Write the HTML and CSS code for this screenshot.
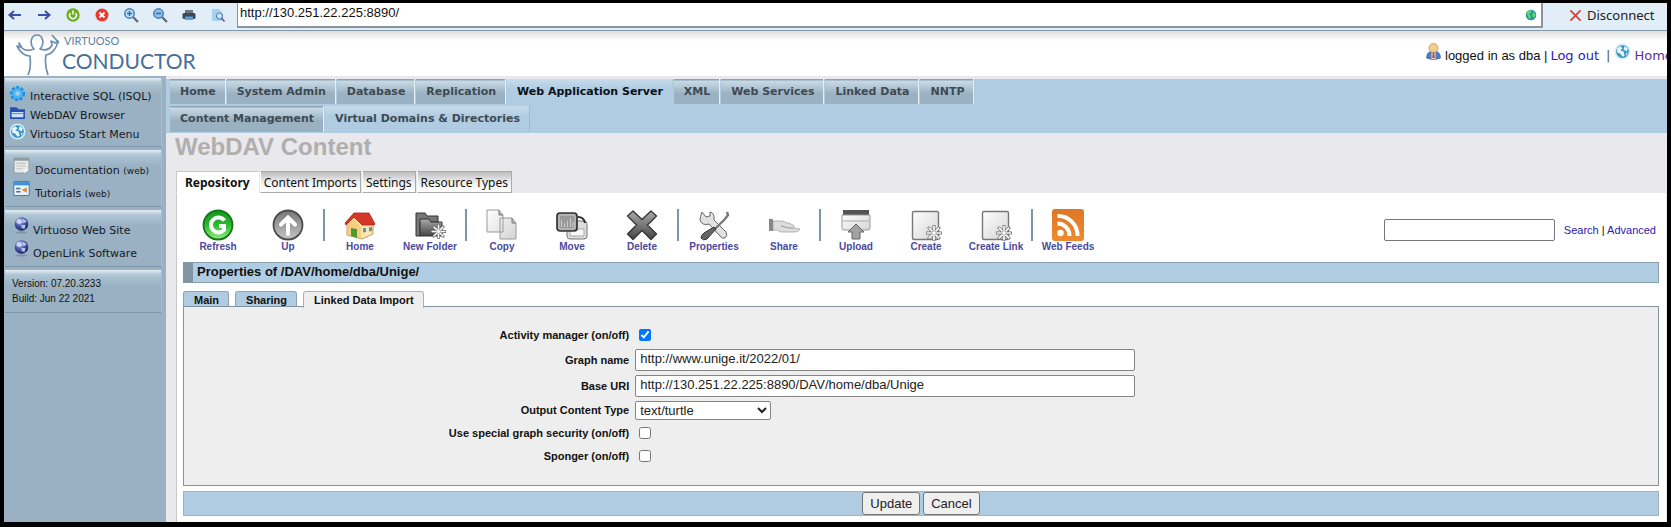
FILE: index.html
```html
<!DOCTYPE html>
<html lang="en">
<head>
<meta charset="utf-8">
<title>Virtuoso Conductor - WebDAV Content</title>
<link rel="stylesheet" href="styles.css">
</head>
<body>
<svg class="defs" width="0" height="0" aria-hidden="true">
  <defs>
    <linearGradient id="gGreen" x1="0" y1="0" x2="0" y2="1"><stop offset="0" stop-color="#0d9a18"/><stop offset=".5" stop-color="#2db92e"/><stop offset="1" stop-color="#8df07e"/></linearGradient>
    <linearGradient id="gGray" x1="0" y1="0" x2="0" y2="1"><stop offset="0" stop-color="#777"/><stop offset="1" stop-color="#c4c4c4"/></linearGradient>
    <linearGradient id="gDark" x1="0" y1="0" x2="0" y2="1"><stop offset="0" stop-color="#aaa"/><stop offset="1" stop-color="#444"/></linearGradient>
    <linearGradient id="gPaper" x1="0" y1="0" x2="1" y2="1"><stop offset="0" stop-color="#fff"/><stop offset="1" stop-color="#d4d4d4"/></linearGradient>
    <linearGradient id="gOrange" x1="0" y1="0" x2="0" y2="1"><stop offset="0" stop-color="#dd7626"/><stop offset="1" stop-color="#f08a2e"/></linearGradient>
    <radialGradient id="gBall" cx=".4" cy=".3" r=".7"><stop offset="0" stop-color="#c8d4f4"/><stop offset=".5" stop-color="#4a5cae"/><stop offset="1" stop-color="#1a2466"/></radialGradient>
    <symbol id="spark" viewBox="0 0 16 16"><path d="M8 1v14M1 8h14M3 3l10 10M13 3L3 13" stroke="#666" stroke-width="3" stroke-linecap="round"/><path d="M8 1.300v13.400M1.300 8h13.400M3.200 3.200l9.600 9.600M12.800 3.200l-9.600 9.600" stroke="#fff" stroke-width="1.700" stroke-linecap="round"/><circle cx="8" cy="8" r="2.200" fill="#fff" stroke="#777" stroke-width=".6"/></symbol>
    <symbol id="globe" viewBox="0 0 16 16"><circle cx="8" cy="8" r="7.500" fill="#d3ecf6"/><circle cx="8" cy="8" r="6" fill="#3a94c4"/><path d="M3 5l3-2 2 2-2 2 3 1 1 4-2 1-2-3-3-1zM10 3l3 2-1 3-3-2zM11 10l2-1-1 3z" fill="#e6f6fb"/></symbol>
    <symbol id="ball" viewBox="0 0 16 17"><ellipse cx="8" cy="15.500" rx="6" ry="1.200" fill="#8494a4"/><circle cx="8" cy="7" r="6.800" fill="url(#gBall)"/><path d="M3 3q3-2 4 0l2 2-3 2-3-1zM9 2q3 0 4 3l-3 1zM8 8l4 0-1 4-3-1z" fill="#d8e0f6" opacity=".8"/></symbol>
  </defs>
</svg>
<div class="page">
  <form class="browser-bar">
    <div class="browser-tools">
      <button type="button" aria-label="Back"><svg viewBox="0 0 16 16"><path d="M14 8H3M7 4L2.500 8 7 12" fill="none" stroke="#3f4ea6" stroke-width="2"/></svg></button>
      <button type="button" aria-label="Forward"><svg viewBox="0 0 16 16"><path d="M2 8h11M9 4l4.500 4L9 12" fill="none" stroke="#3f4ea6" stroke-width="2"/></svg></button>
      <button type="button" aria-label="Reload"><svg viewBox="0 0 16 16"><circle cx="8" cy="8" r="6.700" fill="#6fae22"/><path d="M5.300 6.200a3.400 3.400 0 1 0 5.400 0M8 3.500v4" fill="none" stroke="#fff" stroke-width="1.500"/></svg></button>
      <button type="button" aria-label="Stop"><svg viewBox="0 0 16 16"><circle cx="8" cy="8" r="6.500" fill="#e43c32"/><path d="M5.500 5.500l5 5M10.500 5.500l-5 5" stroke="#fff" stroke-width="1.800"/></svg></button>
      <button type="button" aria-label="Zoom in"><svg viewBox="0 0 16 16"><path d="M10 10l5 5" stroke="#666" stroke-width="2.200"/><circle cx="6.500" cy="6.500" r="4.700" fill="#b9dbf5" stroke="#4380be" stroke-width="1.500"/><path d="M4 6.500h5M6.500 4v5" stroke="#2c68ac" stroke-width="1.300"/></svg></button>
      <button type="button" aria-label="Zoom out"><svg viewBox="0 0 16 16"><path d="M10 10l5 5" stroke="#666" stroke-width="2.200"/><circle cx="6.500" cy="6.500" r="4.700" fill="#8fc1ea" stroke="#4380be" stroke-width="1.500"/><path d="M4 6.500h5" stroke="#2c68ac" stroke-width="1.500"/></svg></button>
      <button type="button" aria-label="Print"><svg viewBox="0 0 16 16"><path d="M4 3h8v4H4z" fill="#6a7680"/><rect x="1.500" y="6" width="13" height="6" rx="1.500" fill="#3c4852"/><path d="M4 9.500h8V13H4z" fill="#5ca0dc"/></svg></button>
      <button type="button" aria-label="Preview"><svg viewBox="0 0 16 16"><path d="M2 2h7l3 3v9H2z" fill="#a5d0f2"/><circle cx="9.500" cy="9" r="3" fill="#d6ebfa" stroke="#5588b4" stroke-width="1.200"/><path d="M11.500 11l3 3.500" stroke="#667" stroke-width="1.700"/></svg></button>
    </div>
    <label class="address"><input type="text" aria-label="Address" value="http://130.251.22.225:8890/"><svg viewBox="0 0 16 16"><circle cx="8" cy="8" r="7" fill="#248fa6"/><path d="M2 5q3-4 6-3l1 2-3 3 2 3-1 4q-4-3-4-6zM10 3q4 2 4 6l-3 3-2-4 2-2z" fill="#5fd36d"/></svg></label>
    <button type="button" class="disconnect"><svg viewBox="0 0 14 14"><path d="M1.500 1.500l11 11M12.500 1.500l-11 11" stroke="#d8443a" stroke-width="2"/></svg>Disconnect</button>
  </form>

  <header class="masthead">
    <a class="brand" href="#">
      <svg viewBox="0 0 46 42"><path d="M12 41C16 33 14 27 14 22 8 22 4 18 1 12l3 1-1-4 3 5c3 3 7 3 12 1-5-5-3-14 3-14s8 9 3 14c6 2 10 0 12-4l-1-4 4 2 3-2c-1 7-6 13-12 14-1 6-1 12 2 20M36 1l7 8" fill="none" stroke="#6f8fae" stroke-width="1.700" stroke-linejoin="round"/></svg>
      <span class="brand-text"><span class="brand-small">VIRTUOSO</span><span class="brand-big">CONDUCTOR</span></span>
    </a>
    <div class="session">
      <svg viewBox="0 0 16 17"><path d="M1 15q0-7 7-7t7 7q-7 3-14 0z" fill="#4a80c4" stroke="#2a5596" stroke-width=".6"/><path d="M6 9l2 2 2-2v7H6z" fill="#f4d9d5"/><path d="M7.300 10h1.400l.5 5H6.800z" fill="#c83a30"/><circle cx="8" cy="5" r="4.500" fill="#f3cd8c" stroke="#b98d47" stroke-width=".7"/></svg>
      <span class="who">logged in as dba |</span>
      <a class="logout" href="#">Log out</a>
      <span class="bar">|</span>
      <svg viewBox="0 0 16 16"><use href="#globe"/></svg>
      <a class="home" href="#">Home</a>
    </div>
  </header>

  <div class="columns">
    <aside class="sidebar">
      <ul class="box tight">
        <li><svg viewBox="0 0 16 16"><circle cx="8" cy="8" r="5.600" fill="#43aef2" stroke="#238ee0" stroke-width="3" stroke-dasharray="2.600 1.500"/><circle cx="8" cy="8" r="4.700" fill="#4bb5f6"/><circle cx="8" cy="8" r="2.200" fill="#a9cde2"/></svg><a href="#">Interactive SQL (ISQL)</a></li>
        <li><svg viewBox="0 0 16 16"><path d="M1 3h6l2 2h6v9H1z" fill="#2450b4"/><path d="M2.500 7.500h11v5h-11z" fill="#cfe3fb"/><path d="M2.500 9h11" stroke="#5d92e4" stroke-width="1"/></svg><a href="#">WebDAV Browser</a></li>
        <li><svg viewBox="0 0 16 16"><use href="#globe"/></svg><a href="#">Virtuoso Start Menu</a></li>
      </ul>
      <ul class="box indent">
        <li><svg viewBox="0 0 16 16"><path d="M1 1h14v11l-4 3H1z" fill="#e9e9e6" stroke="#8c969c" stroke-width=".8"/><path d="M1 1h14v2.500H1z" fill="#8e9ba3"/><path d="M3 6h9M3 8.500h9M3 11h6" stroke="#c0c4c6"/><path d="M15 12h-4v3z" fill="#fff"/></svg><a href="#">Documentation <small>(web)</small></a></li>
        <li><svg viewBox="0 0 16 16"><rect x=".7" y="1.500" width="14.600" height="13" rx="1" fill="#e6f2fb" stroke="#3a82c4"/><path d="M1 2h14v3H1z" fill="#3f8fd6"/><path d="M3 8h4M3 11h4" stroke="#4d6d94" stroke-width="1.300"/><path d="M8 9.500l5-2.500v5z" fill="#e08c2c"/></svg><a href="#">Tutorials <small>(web)</small></a></li>
      </ul>
      <ul class="box">
        <li><svg viewBox="0 0 16 17"><use href="#ball"/></svg><a href="#">Virtuoso Web Site</a></li>
        <li><svg viewBox="0 0 16 17"><use href="#ball"/></svg><a href="#">OpenLink Software</a></li>
      </ul>
      <div class="box version">Version: 07.20.3233<br>Build: Jun 22 2021</div>
    </aside>

    <main class="main">
      <nav class="nav">
        <div class="nav-row">
          <a href="#">Home</a><a href="#">System Admin</a><a href="#">Database</a><a href="#">Replication</a><a href="#" class="active">Web Application Server</a><a href="#">XML</a><a href="#">Web Services</a><a href="#">Linked Data</a><a href="#">NNTP</a>
        </div>
        <div class="nav-row second">
          <a href="#">Content Management</a><a href="#" class="current">Virtual Domains &amp; Directories</a>
        </div>
      </nav>
      <h1>WebDAV Content</h1>
      <nav class="tabs"><a href="#" class="active">Repository</a><a href="#">Content Imports</a><a href="#">Settings</a><a href="#">Resource Types</a></nav>

      <section class="content">
        <div class="toolbar">
          <button type="button"><svg viewBox="0 0 32 32"><circle cx="16" cy="16" r="14.500" fill="url(#gGreen)" stroke="#17761c" stroke-width="1.800"/><path d="M22.500 11.500A7.500 7.500 0 1 0 22 21v-4h-5" fill="none" stroke="#fff" stroke-width="4"/></svg>Refresh</button>
          <button type="button"><svg viewBox="0 0 32 32"><circle cx="16" cy="16" r="14.500" fill="url(#gGray)" stroke="#4c4c4c" stroke-width="1.800"/><path d="M16 25V9M9 15.500L16 8.500l7 7" fill="none" stroke="#fff" stroke-width="4" stroke-linecap="round"/></svg>Up</button>
          <span class="sep"></span>
          <button type="button"><svg viewBox="0 0 32 32"><path d="M3 14l9-7 6 8h11v10l-11 5-15-4z" fill="#fbe7ac" stroke="#b08a48" stroke-width=".8"/><path d="M4 15l6-6 7 9v11l-13-4z" fill="#f7cd82"/><path d="M10 4h15l6 11-1 1H18L10 8l-8 8-1-2z" fill="#d63626" stroke="#a4241a" stroke-width=".8"/><path d="M7 19l6 1v9l-6-2z" fill="#4b9a34"/><path d="M19 19h3v4l-3 .5zM25 18.500l3-.5v4l-3 .5z" fill="#6a8ea8"/></svg>Home</button>
          <button type="button"><svg viewBox="0 0 32 32"><path d="M2 4h9l2 3h11v6H6v14H2z" fill="#777" stroke="#333"/><path d="M6 10h9l2 3h11v14H6z" fill="url(#gDark)" stroke="#333"/><use href="#spark" x="17" y="15" width="15" height="15"/></svg>New Folder</button>
          <span class="sep"></span>
          <button type="button"><svg viewBox="0 0 32 32"><path d="M1 1h12l4 5v17H1zM14 9h12l4 5v16H14z" fill="url(#gPaper)" stroke="#999"/><path d="M13 1v5h4M26 9v5h4" fill="#bbb" stroke="#777"/></svg>Copy</button>
          <button type="button"><svg viewBox="0 0 32 32"><rect x="11" y="12" width="20" height="18" rx="3" fill="#ddd" stroke="#777"/><path d="M14 20h14v7H14z" fill="#f8f8f8" stroke="#aaa"/><path d="M22 8q6 0 7 6" fill="none" stroke="#333" stroke-width="2"/><rect x="1" y="4" width="20" height="18" rx="3" fill="#999" stroke="#333" stroke-width="1.700"/><rect x="3" y="6" width="16" height="14" rx="1" fill="none" stroke="#ccc"/><path d="M5.500 18v-7M8.500 18v-4M11.500 18v-6M14.500 18V9M17 18v-5" stroke="#ccc" fill="none"/></svg>Move</button>
          <button type="button"><svg viewBox="0 0 32 32"><path d="M7 2l9 8.500L25 2l5.500 5-9 9 9 9-5.500 5.500-9-9-9 9L1.500 25l9-9-9-9z" fill="url(#gDark)" stroke="#333" stroke-width="1.300" stroke-linejoin="round"/></svg>Delete</button>
          <span class="sep"></span>
          <button type="button"><svg viewBox="0 0 32 32"><path d="M4 3l4 5 4-1 0-4q5 1 4 8l12 12q2 4-1 6-3 1-5-2L11 15q-7 2-9-4 0-3 2-8z" fill="#e2e2e2" stroke="#666"/><path d="M29 3l1 3-3 4-11 11" fill="none" stroke="#777" stroke-width="2.400"/><path d="M16 18l2 2-9 10q-4 2-6-1 0-3 3-5z" fill="#666" stroke="#333"/></svg>Properties</button>
          <button type="button"><svg viewBox="0 0 32 32"><path d="M1 10h4v12H1z" fill="#888"/><path d="M5 12h9l9 3q4 1 3 4l6 1q-1 3-7 3H13l-4-2H5z" fill="#ddd" stroke="#999" stroke-width=".7"/><path d="M13 17l8 2h5" fill="none" stroke="#999"/></svg>Share</button>
          <span class="sep"></span>
          <button type="button"><svg viewBox="0 0 32 32"><path d="M3 1h26v5H3z" fill="#555"/><path d="M2 6h28v13q0 2-2 2H4q-2 0-2-2z" fill="url(#gPaper)" stroke="#999"/><path d="M3 12h26" stroke="#aaa"/><path d="M16 15l8 8h-4v7h-8v-7H8z" fill="#a2a2a2" stroke="#666"/></svg>Upload</button>
          <button type="button"><svg viewBox="0 0 32 32"><rect x="2.500" y="2.500" width="26" height="28" rx="1.500" fill="url(#gPaper)" stroke="#777" stroke-width="1.400"/><use href="#spark" x="16" y="16" width="16" height="16"/></svg>Create</button>
          <button type="button"><svg viewBox="0 0 32 32"><rect x="2.500" y="2.500" width="26" height="28" rx="1.500" fill="url(#gPaper)" stroke="#777" stroke-width="1.400"/><use href="#spark" x="16" y="16" width="16" height="16"/></svg>Create Link</button>
          <span class="sep"></span>
          <button type="button"><svg viewBox="0 0 32 32"><rect width="32" height="32" rx="3" fill="url(#gOrange)"/><circle cx="8.500" cy="24" r="3.200" fill="#fff"/><path d="M5.500 14.500A12 12 0 0 1 17.500 27M5.500 7A19.500 19.500 0 0 1 25.500 27" fill="none" stroke="#fff" stroke-width="4"/></svg>Web Feeds</button>
          <div class="search"><input type="text" aria-label="Search text"><span><a href="#">Search</a> | <a href="#">Advanced</a></span></div>
        </div>

        <h2>Properties of /DAV/home/dba/Unige/</h2>
        <nav class="subtabs"><a href="#">Main</a><a href="#">Sharing</a><a href="#" class="active">Linked Data Import</a></nav>
        <form class="props">
          <div class="fields">
            <div class="field"><label for="act">Activity manager (on/off)</label><input id="act" type="checkbox" checked></div>
            <div class="field tall"><label for="graph">Graph name</label><input id="graph" type="text" value="http://www.unige.it/2022/01/"></div>
            <div class="field tall"><label for="base">Base URI</label><input id="base" type="text" value="http://130.251.22.225:8890/DAV/home/dba/Unige"></div>
            <div class="field"><label for="type">Output Content Type</label><select id="type"><option>text/turtle</option></select></div>
            <div class="field"><label for="sec">Use special graph security (on/off)</label><input id="sec" type="checkbox"></div>
            <div class="field"><label for="spo">Sponger (on/off)</label><input id="spo" type="checkbox"></div>
          </div>
          <div class="actions"><button type="submit">Update</button><button type="button">Cancel</button></div>
        </form>
      </section>
    </main>
  </div>
</div>
</body>
</html>
```

FILE: styles.css
```css
* { box-sizing: border-box; }
body { margin: 0; background: #000; font-family: "Liberation Sans", Arial, sans-serif; color: #111; }
a { text-decoration: none; }
button { font-family: inherit; cursor: pointer; }
.defs { position: absolute; }
.page {
  min-height: 100vh;
  display: flex;
  flex-direction: column;
  border: solid #000;
  border-width: 3px 4px 5px;
  background: #fff;
  overflow: hidden;
}

.browser-bar { display: flex; height: 28px; background: #e1eef8; border-bottom: 1px solid #8499a8; }
.browser-tools { display: flex; align-items: center; gap: 13px; padding: 0 11px 4px 3px; }
.browser-tools button { width: 16px; height: 16px; padding: 0; border: 0; background: none; }
.browser-tools button svg { display: block; width: 16px; height: 16px; }
.address { flex: 1; display: flex; align-items: center; height: 25px; padding-right: 4px; background: #fff; border: 1px solid #8b949b; border-width: 0 2px 2px 1px; }
.address input { flex: 1; min-width: 0; height: 22px; padding: 0 0 4px 2px; border: 0; background: none; font: 13px "Liberation Sans", Arial, sans-serif; color: #111; }
.address svg { width: 12px; height: 12px; }
.disconnect { width: 124px; padding: 0 0 3px 26px; border: 0; background: none; display: flex; align-items: center; gap: 5px; font: 13px "Noto Sans", sans-serif; color: #222; }
.disconnect svg { width: 13px; height: 13px; }

.masthead { display: flex; justify-content: space-between; height: 45px; background: linear-gradient(#dfdfdf, #fff 10px); }
.brand { display: flex; align-items: flex-end; padding-left: 12px; color: #5c7fa3; }
.brand svg { width: 46px; height: 42px; }
.brand-text { display: flex; flex-direction: column; padding-bottom: 2px; font-family: Lato, sans-serif; }
.brand-small { padding-left: 2px; font-size: 11px; line-height: 14px; }
.brand-big { font-size: 21px; line-height: 26px; color: #456f9a; }
.session { flex: none; display: flex; align-items: center; gap: 3px; width: 242px; padding-top: 3px; font-size: 13px; white-space: nowrap; }
.session > * { flex: none; }
.session svg { width: 17px; height: 17px; margin-bottom: 8px; }
.logout, .bar, .home { font-family: "DejaVu Sans", Verdana, sans-serif; }
.logout { color: #2a20c0; }
.bar { color: #555; padding: 0 1px 0 4px; }
.home { color: #5b3090; }

.columns { flex: 1; display: flex; }
.sidebar { flex: none; width: 162px; padding: 2px 4px 0 1px; background: #9ab1c4; font-family: "DejaVu Sans", Verdana, sans-serif; font-size: 11px; }
.box { margin: 0 0 3px; padding: 7px 0 0 8px; list-style: none; border-bottom: 1px solid #7d97aa; border-right: 1px solid #a8bccb; background: linear-gradient(#e6eef3, #aec5d4 5px, #9ab1c4 16px); }
.box li { display: flex; align-items: center; gap: 3px; height: 23px; }
.box svg { flex: none; width: 17px; height: 17px; margin-bottom: 6px; }
.box a { color: #14191d; white-space: nowrap; padding-top: 4px; }
.box small { font-size: 9px; }
.box.tight { padding: 7px 0 4px 4px; }
.box.tight li { height: 19px; gap: 4px; }
.box.tight svg { margin-bottom: 3px; }
.box.indent li { gap: 5px; }
.box:not(.tight) { min-height: 57px; }
.box.version { min-height: 43px; padding: 6px 0 6px 7px; font: 10px/15px "Liberation Sans", Arial, sans-serif; }

.main { flex: 1; min-width: 0; display: flex; flex-direction: column; background: #e8e8ed; }
.nav { margin-top: 3px; padding-left: 4px; background: #b0cce2; font: bold 11px "DejaVu Sans", Verdana, sans-serif; }
.nav-row { display: flex; gap: 1px; height: 27px; padding-bottom: 2px; }
.nav-row a { padding: 6px 9px 0 10px; color: #3e4a52; background: linear-gradient(#8ba3b3 0, #8ba3b3 1px, #c9dae5 2px, #9ab1c2 15px); border-right: 1px solid #e4eef4; white-space: nowrap; }
.nav-row .active { color: #0b1116; background: linear-gradient(#c8dcec, #b0cce2 10px); border-right-color: #b0cce2; }
.nav-row .current { background: linear-gradient(#c8dcec, #b0cce2 10px); border-right: 1px solid #9cb9d0; }
.nav-row.second { padding-bottom: 1px; }
h1 { margin: 0; padding-left: 9px; font-size: 24px; line-height: 28px; color: #afafad; }
.tabs { display: flex; gap: 1px; margin-top: 10px; padding-left: 10px; font: 12px/19px "Noto Sans", "DejaVu Sans", sans-serif; }
.tabs a { height: 22px; padding: 1px 3px 0; color: #111; border: 1px solid #aaa; border-left-color: #fff; background: linear-gradient(#bdbdbd, #eee 10px, #fff); }
.tabs .active { padding: 1px 8px 0 8px; font-weight: bold; background: #fff; border-color: #c8c8c8 #fff #fff #c8c8c8; }

.content { flex: 1; margin: 0 1px 0 10px; padding: 16px 7px 6px 6px; display: flex; flex-direction: column; background: #fff; border-left: 1px solid #c8c8c8; }
.toolbar { display: flex; align-items: flex-start; }
.toolbar button { flex: none; width: 70px; padding: 0; border: 0; background: none; font-size: 10px; line-height: 11px; font-weight: bold; color: #4a4a9c; }
.toolbar button svg { display: block; width: 32px; height: 32px; margin: 0 auto; }
.sep { flex: none; width: 2px; height: 32px; background: #7d95a6; }
.search { margin: 10px 3px 0 auto; display: flex; align-items: center; gap: 9px; font-size: 11px; white-space: nowrap; }
.search input { width: 171px; height: 22px; border: 1px solid #777; border-radius: 2px; background: #fff; }
.search a { color: #2a20b4; }
h2 { margin: 10px 0 8px; padding-left: 4px; font-size: 13px; line-height: 17px; height: 21px; border: 1px solid #889fae; border-left: 10px solid #8094a4; background: #b0cce2; }
.subtabs { display: flex; gap: 6px; font: bold 11px/16px "Liberation Sans", Arial, sans-serif; }
.subtabs a { height: 16px; padding: 0 9px 0 10px; color: #111; background: #b0cce2; border: 1px solid #8ba3b5; border-bottom: 0; border-radius: 3px 3px 0 0; white-space: nowrap; }
.subtabs .active { height: 17px; margin-bottom: -1px; background: #eee; z-index: 1; border-color: #aab2b8; }
.props { display: flex; flex-direction: column; flex: 1; gap: 5px; margin-top: -1px; }
.fields { flex: 1; display: flex; flex-direction: column; gap: 1px; padding: 17px 0 12px; border: 1px solid #8593a0; background: #eee; }
.field { display: grid; grid-template-columns: 30% minmax(0, 500px); align-items: center; column-gap: 9px; height: 22px; }
.field.tall { height: 25px; }
.field label { margin-right: -3px; text-align: right; font-size: 11px; font-weight: bold; }
.field input[type="text"] { width: 100%; height: 22px; padding: 0 4px 2px; border: 1px solid #858585; border-radius: 2px; background: #fff; font: 13px "Liberation Sans", Arial, sans-serif; color: #222; }
.field input[type="checkbox"] { margin: 0 4px; width: 12px; height: 12px; }
.field select { width: 136px; height: 19px; padding: 0; border: 1px solid #858585; border-radius: 2px; background: #fff; font: 13px "Liberation Sans", Arial, sans-serif; color: #222; }
.actions { display: flex; justify-content: center; align-items: center; gap: 3px; height: 25px; border: 1px solid #9fb3c0; background: #b0cce2; }
.actions button { height: 23px; padding: 0 7px; border: 1px solid #767676; border-radius: 3px; background: #efefef; font-size: 13px; color: #222; }
```
